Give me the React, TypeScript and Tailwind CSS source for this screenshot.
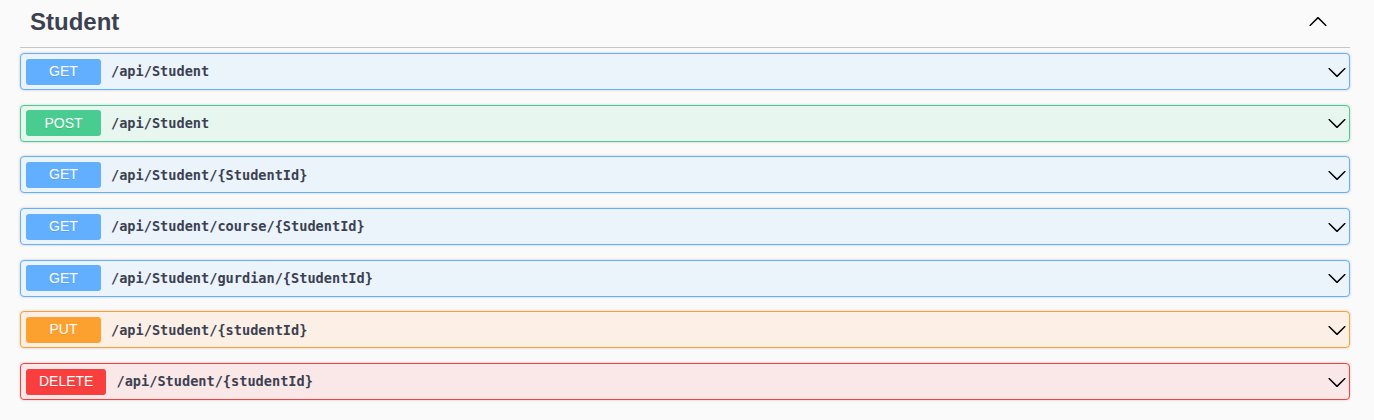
import React from "react";

type Method = "GET" | "POST" | "PUT" | "DELETE";

const styles: Record<Method, { block: string; badge: string }> = {
	GET: { block: "border-[#61affe] bg-[#ebf3fb]", badge: "bg-[#61affe]" },
	POST: { block: "border-[#49cc90] bg-[#e8f6f0]", badge: "bg-[#49cc90]" },
	PUT: { block: "border-[#fca130] bg-[#fcf0e6]", badge: "bg-[#fca130]" },
	DELETE: { block: "border-[#f93e3e] bg-[#fae7e7]", badge: "bg-[#f93e3e]" },
};

const endpoints: { method: Method; path: string }[] = [
	{ method: "GET", path: "/api/Student" },
	{ method: "POST", path: "/api/Student" },
	{ method: "GET", path: "/api/Student/{StudentId}" },
	{ method: "GET", path: "/api/Student/course/{StudentId}" },
	{ method: "GET", path: "/api/Student/gurdian/{StudentId}" },
	{ method: "PUT", path: "/api/Student/{studentId}" },
	{ method: "DELETE", path: "/api/Student/{studentId}" },
];

// swagger-ui arrow
function Arrow({ up = false }: { up?: boolean }) {
	return (
		<svg
			width="20"
			height="20"
			viewBox="0 0 20 20"
			className={up ? "rotate-180" : ""}
			fill="#000"
		>
			<path d="M17.418 6.109c.272-.268.709-.268.979 0s.271.701 0 .969l-7.908 7.83c-.27.268-.707.268-.979 0l-7.908-7.83c-.27-.268-.27-.701 0-.969.271-.268.709-.268.979 0L10 13.25l7.418-7.141z" />
		</svg>
	);
}

function Operation({ method, path }: { method: Method; path: string }) {
	const s = styles[method];
	return (
		<div
			className={`flex items-center h-[37px] mb-[14.7px] border rounded-[4px] px-[5px] shadow-[0_0_3px_rgba(0,0,0,0.19)] ${s.block}`}
		>
			<span
				className={`min-w-[75px] h-[26px] px-[13px] flex items-center justify-center rounded-[3px] text-white text-[14px] font-normal [text-shadow:0_1px_0_rgba(0,0,0,0.1)] ${s.badge}`}
			>
				{method}
			</span>
			<span className="ml-[10px] flex-1 text-[#3b4151] text-[13.6px] font-bold font-['DejaVu_Sans_Mono',monospace]">
				{path}
			</span>
			<span className="mr-[-3px]">
				<Arrow />
			</span>
		</div>
	);
}

export default function App() {
	return (
		<div className="min-h-[420px] bg-[#fafafa] pl-[20px] pr-[24px] font-['Liberation_Sans',Arial,sans-serif]">
			<div className="flex items-center h-[48px] pl-[10px] pr-[22px] border-b border-[#c4c6cb] mb-[5px]">
				<h3 className="flex-1 text-[24px] font-bold text-[#3b4151] pb-[4px]">Student</h3>
				<span className="pb-[4px]">
					<Arrow up />
				</span>
			</div>
			{endpoints.map((e, i) => (
				<Operation key={i} method={e.method} path={e.path} />
			))}
		</div>
	);
}
